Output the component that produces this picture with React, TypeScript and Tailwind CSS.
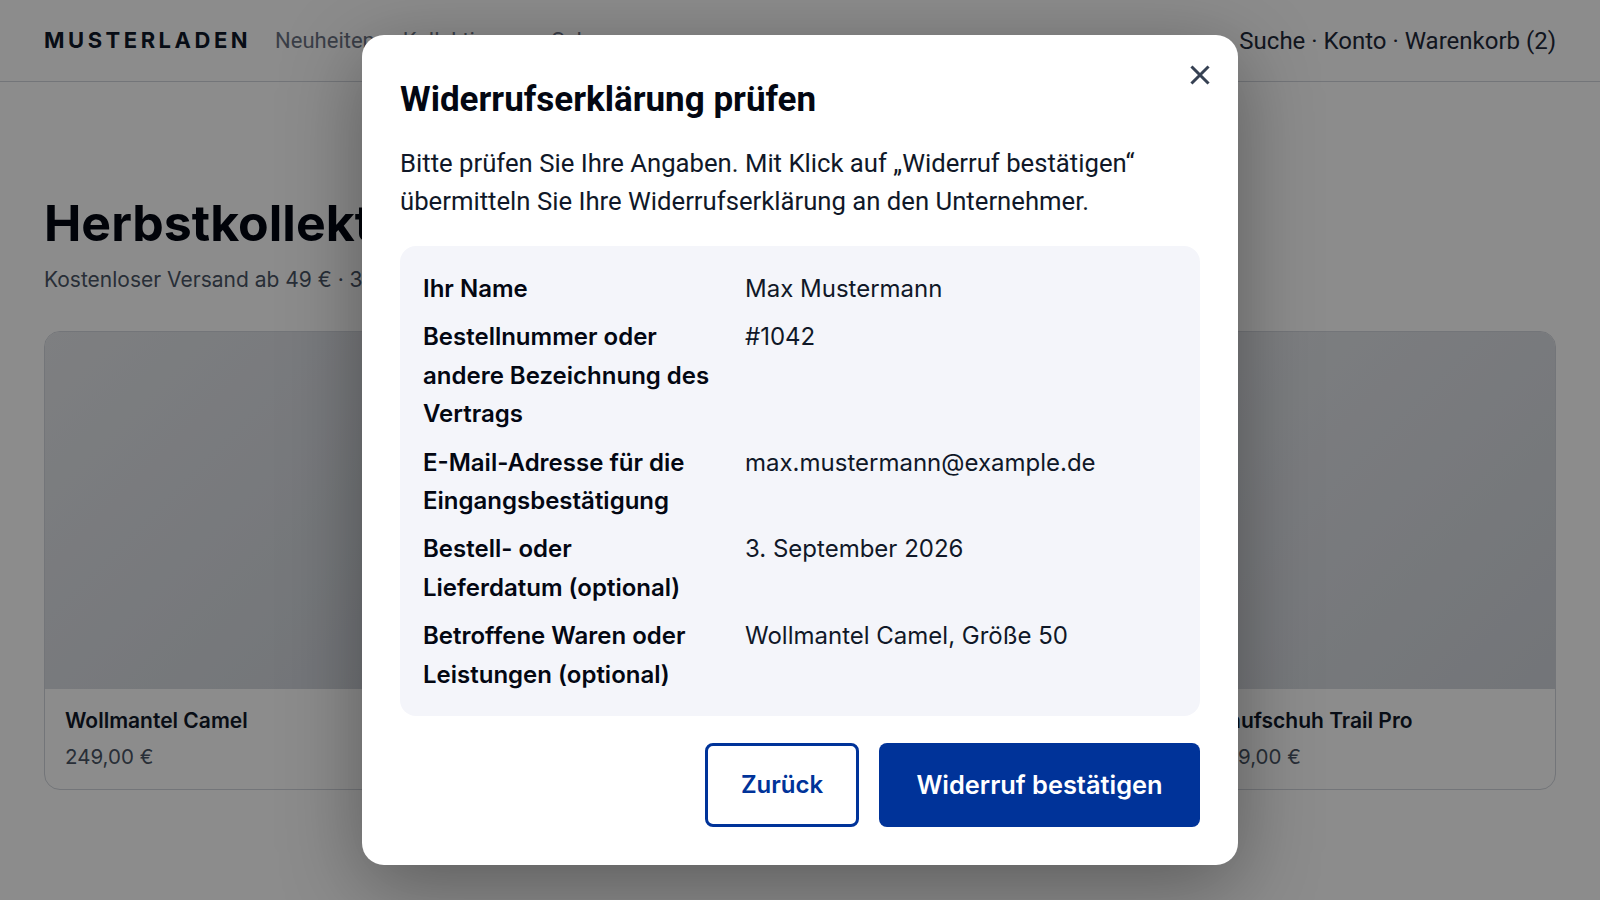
import { useState } from "react";

const PRODUCTS = [
  { name: "Wollmantel Camel", price: "249,00 €" },
  { name: "Strickpullover Merino", price: "119,00 €" },
  { name: "Lederstiefel Cognac", price: "189,00 €" },
  { name: "Laufschuh Trail Pro", price: "139,00 €" },
];

const ROWS = [
  { label: "Ihr Name", value: "Max Mustermann" },
  { label: "Bestellnummer oder andere Bezeichnung des Vertrags", value: "#1042" },
  { label: "E-Mail-Adresse für die Eingangsbestätigung", value: "max.mustermann@example.de" },
  { label: "Bestell- oder Lieferdatum (optional)", value: "3. September 2026" },
  { label: "Betroffene Waren oder Leistungen (optional)", value: "Wollmantel Camel, Größe 50" },
];

function Shop() {
  return (
    <div className="min-h-[900px] bg-white font-['Inter',sans-serif]">
      {/* Header */}
      <header className="flex h-[82px] items-center justify-between border-b border-gray-300 px-11">
        <div className="flex items-center gap-6">
          <span className="text-[22px] font-bold tracking-[0.16em] text-gray-900">MUSTERLADEN</span>
          <nav className="flex gap-7 font-['Roboto',sans-serif] text-[22px] text-gray-500">
            <span>Neuheiten</span>
            <span>Kollektionen</span>
            <span>Sale</span>
          </nav>
        </div>
        <div className="font-['Roboto',sans-serif] text-[24px] text-gray-800">Suche · Konto · Warenkorb (2)</div>
      </header>

      <main className="px-11 pt-[114px]">
        <h1 className="text-[50px] font-bold leading-[55px] text-gray-950">Herbstkollektion 2026</h1>
        <p className="mt-[15px] text-[21px] leading-7 text-gray-600">Kostenloser Versand ab 49 € · 30 Tage Rückgaberecht</p>

        <div className="mt-[37px] grid grid-cols-4 gap-6">
          {PRODUCTS.map((p) => (
            <div key={p.name} className="overflow-hidden rounded-2xl border border-gray-300">
              <div className="h-[357px] bg-gradient-to-br from-gray-200 to-gray-300" />
              <div className="flex h-[100px] flex-col justify-center gap-[8px] px-5">
                <div className="text-[21px] font-semibold leading-7 text-gray-900">{p.name}</div>
                <div className="text-[20.5px] leading-7 text-gray-600">{p.price}</div>
              </div>
            </div>
          ))}
        </div>
      </main>
    </div>
  );
}

export default function App() {
  const [open, setOpen] = useState(true);

  return (
    <div className="relative h-[900px] w-[1600px] overflow-hidden">
      <Shop />

      {open && (
        <div className="absolute inset-0 flex items-center justify-center bg-black/45">
          <div className="relative w-[876px] rounded-[22px] bg-white px-[38px] pb-[38px] pt-[45px] shadow-[0_20px_80px_rgba(0,0,0,0.35)]">
            <button
              onClick={() => setOpen(false)}
              className="absolute right-[22px] top-[24px] flex h-8 w-8 items-center justify-center text-gray-700">
              <svg width="20" height="20" viewBox="0 0 20 20" fill="none" stroke="currentColor" strokeWidth="3" strokeLinecap="square">
                <path d="M2.5 2.5 17.5 17.5M17.5 2.5 2.5 17.5" />
              </svg>
            </button>

            <h2 className="font-['Roboto',sans-serif] text-[35px] font-bold leading-[40px] text-gray-950">
              Widerrufserklärung prüfen
            </h2>
            <p className="mt-[24px] font-['Roboto',sans-serif] text-[25.7px] leading-[38.4px] text-gray-900">
              Bitte prüfen Sie Ihre Angaben. Mit Klick auf „Widerruf bestätigen“ übermitteln Sie Ihre Widerrufserklärung an den Unternehmer.
            </p>

            <dl className="mt-[25px] grid grid-cols-[290px_1fr] gap-x-8 gap-y-[10px] rounded-2xl bg-[#f4f5fa] px-[23px] pb-[22px] pt-[24px] font-['Inter',sans-serif] text-[24px] leading-[38.4px] text-gray-950">
              {ROWS.map((r) => (
                <div key={r.label} className="contents">
                  <dt className="font-semibold">{r.label}</dt>
                  <dd className="text-gray-900">{r.value}</dd>
                </div>
              ))}
            </dl>

            <div className="mt-[27px] flex justify-end gap-5 font-['Inter',sans-serif] font-semibold">
              <button className="flex h-[84px] w-[154px] items-center justify-center rounded-lg border-[3px] border-[#003399] bg-white text-[24px] text-[#003399]">
                Zurück
              </button>
              <button className="flex h-[84px] w-[321px] items-center justify-center rounded-lg bg-[#003399] text-[25.4px] text-white">
                Widerruf bestätigen
              </button>
            </div>
          </div>
        </div>
      )}
    </div>
  );
}
